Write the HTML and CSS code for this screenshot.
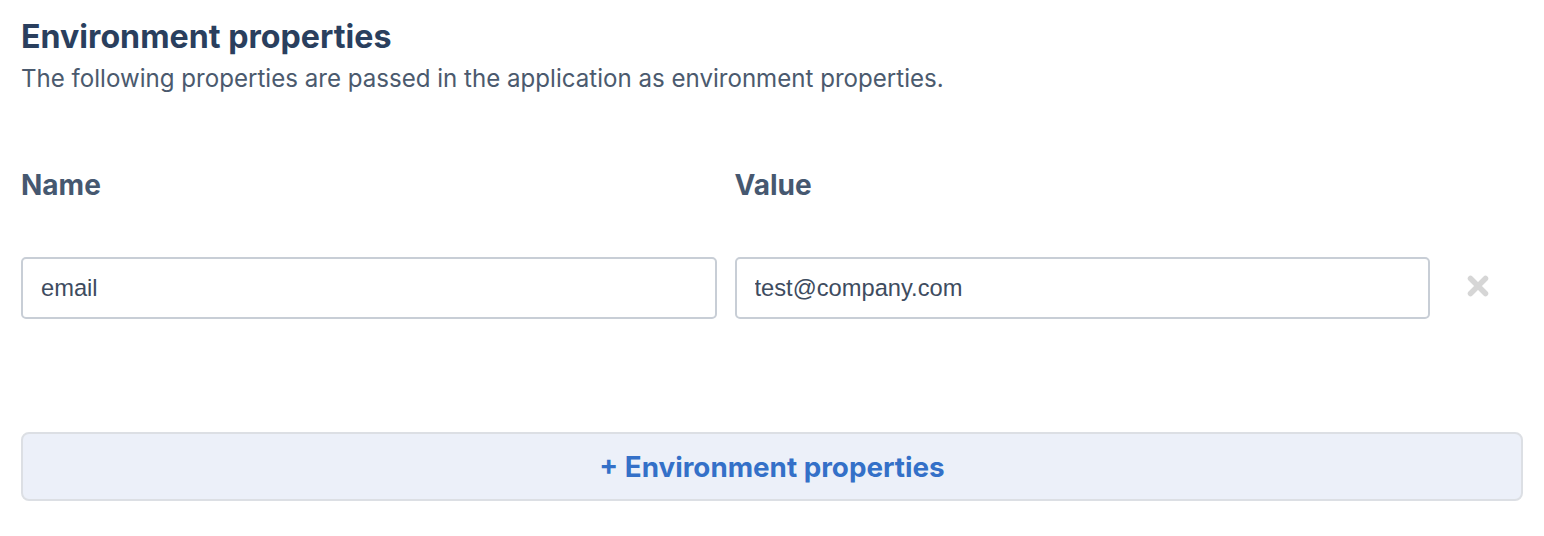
FILE: index.html
```html
<!DOCTYPE html>
<html>
<head>
<meta charset="utf-8">
<link rel="stylesheet" href="styles.css">
</head>
<body>
<section class="panel">
  <h2 class="title">Environment properties</h2>
  <p class="subtitle">The following properties are passed in the application as environment properties.</p>
  <div class="grid">
    <div class="label">Name</div>
    <div class="label">Value</div>
    <div></div>
    <input class="field" type="text" value="email">
    <input class="field" type="text" value="test@company.com">
    <button class="remove" type="button" aria-label="Remove">
      <svg width="24" height="24" viewBox="0 0 24 24"><path d="M4.5 4.5 L19.5 19.5 M19.5 4.5 L4.5 19.5" stroke="#d6d6d6" stroke-width="5.5" stroke-linecap="round" fill="none"/></svg>
    </button>
  </div>
  <button class="add" type="button">+ Environment properties</button>
</section>
</body>
</html>
```
FILE: styles.css
```css
html, body {
  margin: 0;
  padding: 0;
  background: #ffffff;
}
.panel {
  width: 1502px;
  padding: 18px 0 0 21px;
  font-family: Inter, Roboto, sans-serif;
}
.title {
  margin: 0;
  font-size: 32.2px;
  line-height: 38px;
  font-weight: 700;
  color: #2a3f5e;
}
.subtitle {
  margin: 7px 0 0 0;
  font-size: 24.1px;
  line-height: 32px;
  font-weight: 400;
  color: #4b5a6e;
}
.grid {
  display: grid;
  grid-template-columns: 1fr 1fr 75px;
  column-gap: 18px;
  row-gap: 57px;
  margin-top: 75px;
  align-items: center;
}
.label {
  font-size: 28px;
  line-height: 30px;
  font-weight: 700;
  color: #465870;
}
.field {
  box-sizing: border-box;
  height: 62px;
  width: 100%;
  margin: 0;
  padding: 0 18px;
  border: 2px solid #c8ced6;
  border-radius: 5px;
  font-family: "Liberation Sans", Arial, sans-serif;
  font-size: 23.7px;
  color: #3e4c5f;
  background: #fff;
  outline: none;
}
.remove {
  border: 0;
  background: none;
  padding: 0 0 5px 18px;
  margin: 0;
  display: flex;
  align-items: center;
  height: 62px;
  cursor: pointer;
}
.remove svg {
  display: block;
}
.add {
  display: block;
  box-sizing: border-box;
  width: 100%;
  height: 69px;
  margin-top: 113px;
  border: 2px solid #dcdfe4;
  border-radius: 8px;
  background: #ecf0f9;
  color: #3470c8;
  font-family: Inter, Roboto, sans-serif;
  font-size: 27.8px;
  font-weight: 700;
  cursor: pointer;
}
```
